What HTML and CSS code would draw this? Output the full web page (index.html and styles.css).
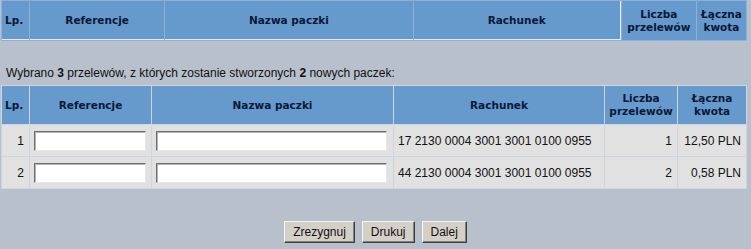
FILE: index.html
```html
<!DOCTYPE html>
<html lang="pl">

<head>
    <meta charset="UTF-8">
    <title>Tworzenie paczek</title>
    <link rel="stylesheet" href="styles.css">
</head>

<body>
    <table class="grid top">
        <colgroup>
            <col class="c-lp"><col class="t-ref"><col class="t-name"><col class="t-acc"><col class="t-cnt"><col class="t-sum">
        </colgroup>
        <tr>
            <th class="lp mark">Lp.</th>
            <th class="mark">Referencje</th>
            <th class="mark">Nazwa paczki</th>
            <th class="mark edge">Rachunek</th>
            <th class="short">Liczba<br>przelewów</th>
            <th class="short">Łączna<br>kwota</th>
        </tr>
    </table>

    <p class="info">Wybrano <b>3</b> przelewów, z których zostanie stworzonych <b>2</b> nowych paczek:</p>

    <table class="grid list">
        <colgroup>
            <col class="c-lp"><col class="c-ref"><col class="c-name"><col class="c-acc"><col class="c-cnt"><col class="c-sum">
        </colgroup>
        <tr>
            <th class="lp">Lp.</th>
            <th>Referencje</th>
            <th>Nazwa paczki</th>
            <th>Rachunek</th>
            <th>Liczba<br>przelewów</th>
            <th>Łączna<br>kwota</th>
        </tr>
        <tr>
            <td class="num">1</td>
            <td><input type="text" class="ref"></td>
            <td><input type="text" class="name"></td>
            <td>17 2130 0004 3001 3001 0100 0955</td>
            <td class="num">1</td>
            <td class="num">12,50 PLN</td>
        </tr>
        <tr>
            <td class="num">2</td>
            <td><input type="text" class="ref"></td>
            <td><input type="text" class="name"></td>
            <td>44 2130 0004 3001 3001 0100 0955</td>
            <td class="num">2</td>
            <td class="num">0,58 PLN</td>
        </tr>
    </table>

    <div class="actions">
        <button>Zrezygnuj</button>
        <button>Drukuj</button>
        <button>Dalej</button>
    </div>
</body>

</html>
```

FILE: styles.css
```css
body {
    margin: 0;
    background-color: #b8c0cc;
    font-family: "Liberation Sans", Arial, sans-serif;
    font-size: 12px;
    color: #111;
}

.grid {
    table-layout: fixed;
    border-collapse: separate;
    border-spacing: 1px;
    width: 746px;
    margin-left: 1px;
}

.grid th {
    background-color: #6699cc;
    color: #0a1836;
    font-family: "DejaVu Sans", Verdana, sans-serif;
    font-size: 10.5px;
    font-weight: bold;
    line-height: 13px;
    text-align: center;
    padding: 0;
}

.grid th.lp {
    text-align: left;
    padding-left: 3px;
}

/* górna tabela - sam nagłówek */
.top {
    background-color: #8fb0d6;
}

.top th {
    height: 38px;
}

.top th.mark {
    border-bottom: 1px solid #e4ecf4;
}

.top th.edge {
    border-right: 1px solid #e4ecf4;
}

.c-lp { width: 27px; }
.t-ref { width: 134px; }
.t-name { width: 247px; }
.t-acc { width: 207px; }
.t-cnt { width: 74px; }
.t-sum { width: 49px; }

.c-ref { width: 121px; }
.c-name { width: 241px; }
.c-acc { width: 210px; }
.c-cnt { width: 72px; }
.c-sum { width: 68px; }

.info {
    margin: 25px 0 5px 6px;
    line-height: 14px;
}

.list {
    background-color: #cfd5de;
}

.list th {
    height: 38px;
}

.list td {
    background-color: #e1e1e1;
    height: 31px;
    padding: 0 0 0 4px;
    white-space: nowrap;
}

.list td.num {
    text-align: right;
    padding: 0 5px 0 0;
}

.list input {
    box-sizing: border-box;
    height: 20px;
    margin: 0;
    padding: 1px 3px;
    border: 1px solid;
    border-color: #6e6e6e #e6e6e6 #e6e6e6 #6e6e6e;
    box-shadow: inset 1px 1px 0 #b4b4b4;
    background: #fff;
    font-family: inherit;
    font-size: 12px;
    vertical-align: middle;
}

.list input.ref {
    width: 112px;
}

.list input.name {
    width: 231px;
}

.actions {
    display: flex;
    justify-content: center;
    gap: 7px;
    margin-top: 32px;
}

.actions button {
    height: 22px;
    padding: 0 8px;
    background-color: #d4d0c8;
    border: 1px solid;
    border-color: #f4f4f4 #404040 #404040 #f4f4f4;
    box-shadow: inset -1px -1px 0 #808080;
    font-family: "Liberation Sans", Arial, sans-serif;
    font-size: 12px;
    color: #111;
}
```
